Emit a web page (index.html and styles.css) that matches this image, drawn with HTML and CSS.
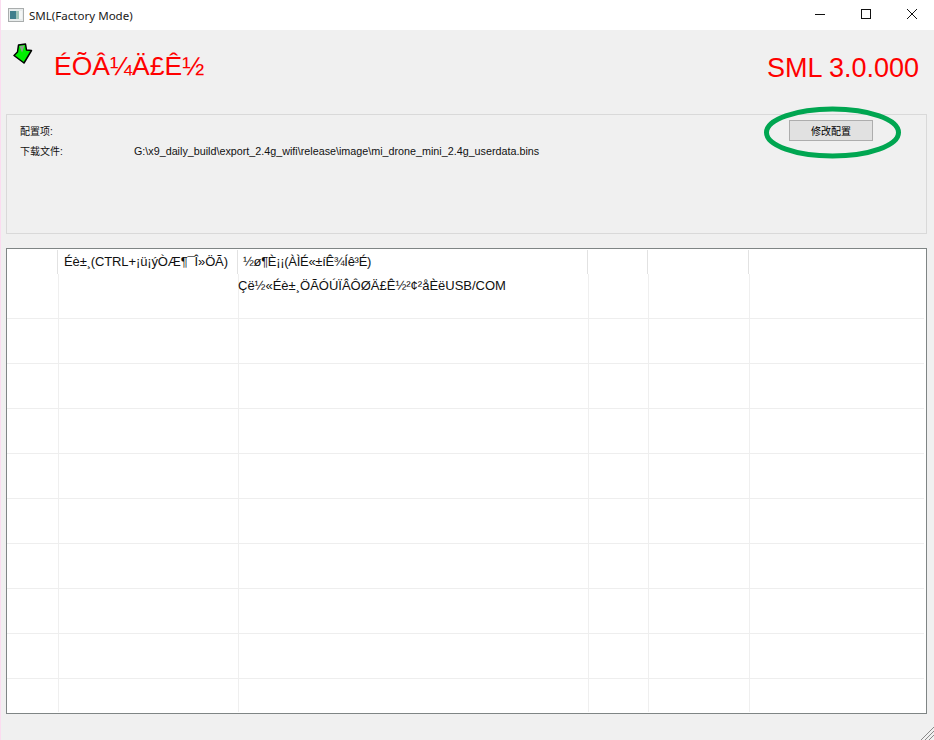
FILE: index.html
```html
<!DOCTYPE html>
<html lang="zh">
<head>
<meta charset="utf-8">
<title>SML(Factory Mode)</title>
<link rel="stylesheet" href="styles.css">
</head>
<body>
<div class="window">
  <header class="titlebar">
    <svg class="app-icon" width="16" height="14" viewBox="0 0 16 14">
      <rect x="0.5" y="0.5" width="15" height="13" fill="#e8ecec" stroke="#a9adad"/>
      <rect x="2" y="3" width="6" height="8" fill="#3f7f8c"/>
      <rect x="8" y="3" width="3" height="8" fill="#9fc4b8"/>
      <rect x="11" y="3" width="3" height="8" fill="#f4f6f6"/>
    </svg>
    <span class="title-text">SML(Factory Mode)</span>
    <div class="win-controls">
      <svg class="win-btn" width="46" height="30" viewBox="0 0 46 30"><path d="M18 14.5H28" stroke="#111" fill="none"/></svg>
      <svg class="win-btn" width="46" height="30" viewBox="0 0 46 30"><rect x="18.5" y="9.5" width="9" height="9" stroke="#111" fill="none"/></svg>
      <svg class="win-btn" width="46" height="30" viewBox="0 0 46 30"><path d="M18 9L28 19M28 9L18 19" stroke="#111" fill="none"/></svg>
    </div>
  </header>

  <section class="banner">
    <svg class="arrow" width="20" height="22" viewBox="0 0 20 22">
      <path d="M5.5 2L12.5 1L13.5 7L18.5 7.5L11 20L1 12.5L4.5 9Z" fill="#00ee00" stroke="#000" stroke-width="1.5" stroke-linejoin="round"/>
      <path d="M6.5 3L11.5 2.5L9 9.5Z" fill="#8fa08f"/>
    </svg>
    <div class="mode">ÉÕÂ¼Ä£Ê½</div>
    <div class="version">SML 3.0.000</div>
  </section>

  <section class="group">
    <div class="info">
      <div class="info-row"><span class="info-label">配置项:</span></div>
      <div class="info-row"><span class="info-label">下载文件:</span><span class="info-value">G:\x9_daily_build\export_2.4g_wifi\release\image\mi_drone_mini_2.4g_userdata.bins</span></div>
    </div>
    <button class="config-btn" type="button">修改配置</button>
    <svg class="highlight" width="139" height="53" viewBox="0 0 139 53"><ellipse cx="69.5" cy="26.5" rx="66" ry="23.5" fill="none" stroke="#00a651" stroke-width="5"/></svg>
  </section>

  <section class="grid">
    <div class="row head">
      <div class="cell"></div>
      <div class="cell t1">Éè±¸(CTRL+¡ü¡ýÒÆ¶¯Î»ÖÃ)</div>
      <div class="cell t2">½ø¶È¡¡(ÀÌÉ«±íÊ¾Íê³É)</div>
      <div class="cell"></div>
      <div class="cell"></div>
      <div class="cell"></div>
    </div>
    <div class="row"><div class="cell"></div><div class="cell"></div><div class="cell msg">Çë½«Éè±¸ÖÃÓÚÏÂÔØÄ£Ê½²¢²åÈëUSB/COM</div><div class="cell"></div><div class="cell"></div><div class="cell"></div></div>
    <div class="row"><div class="cell"></div><div class="cell"></div><div class="cell"></div><div class="cell"></div><div class="cell"></div><div class="cell"></div></div>
    <div class="row"><div class="cell"></div><div class="cell"></div><div class="cell"></div><div class="cell"></div><div class="cell"></div><div class="cell"></div></div>
    <div class="row"><div class="cell"></div><div class="cell"></div><div class="cell"></div><div class="cell"></div><div class="cell"></div><div class="cell"></div></div>
    <div class="row"><div class="cell"></div><div class="cell"></div><div class="cell"></div><div class="cell"></div><div class="cell"></div><div class="cell"></div></div>
    <div class="row"><div class="cell"></div><div class="cell"></div><div class="cell"></div><div class="cell"></div><div class="cell"></div><div class="cell"></div></div>
    <div class="row"><div class="cell"></div><div class="cell"></div><div class="cell"></div><div class="cell"></div><div class="cell"></div><div class="cell"></div></div>
    <div class="row"><div class="cell"></div><div class="cell"></div><div class="cell"></div><div class="cell"></div><div class="cell"></div><div class="cell"></div></div>
    <div class="row"><div class="cell"></div><div class="cell"></div><div class="cell"></div><div class="cell"></div><div class="cell"></div><div class="cell"></div></div>
    <div class="row last"><div class="cell"></div><div class="cell"></div><div class="cell"></div><div class="cell"></div><div class="cell"></div><div class="cell"></div></div>
  </section>

  <svg class="grip" width="14" height="14" viewBox="0 0 14 14">
    <path d="M1 14L14 1M5 14L14 5M9 14L14 9" stroke="#8a8a8a" fill="none"/>
  </svg>
</div>
</body>
</html>
```
FILE: styles.css
```css
* { box-sizing: border-box; }
html, body { margin: 0; padding: 0; }
body { width: 934px; height: 740px; overflow: hidden; background: #f0f0f0; }

.window {
  position: relative;
  width: 934px;
  height: 740px;
  background: #f0f0f0;
  border-left: 1px solid #fbdcf0;
  padding-left: 5px;
  padding-right: 7px;
  font-family: "Liberation Sans", Arial, sans-serif;
  color: #000;
}

.titlebar {
  display: flex;
  align-items: center;
  height: 30px;
  margin: 0 -7px 0 -5px;
  padding-left: 7px;
  background: #fff;
}
.app-icon { margin-right: 5px; flex: none; }
.title-text { font-family: "Noto Sans", sans-serif; font-size: 11.55px; color: #1a1a1a; }
.win-controls { display: flex; margin-left: auto; margin-right: -1px; }
.win-btn { display: block; }

.banner { position: relative; display: flex; height: 84px; }
.arrow { margin: 13px 0 0 7px; flex: none; }
.mode {
  margin: 18px 0 0 21px;
  font-size: 26.5px;
  line-height: 37px;
  color: #ff0000;
}
.version {
  margin: 21px 8px 0 auto;
  font-size: 27px;
  line-height: 34px;
  color: #ff0000;
}

.group {
  position: relative;
  height: 120px;
  border: 1px solid #d9d9d9;
  display: flex;
  justify-content: space-between;
}
.info { padding: 10px 0 0 13px; font-size: 10.75px; color: #111; }
.info-row { display: flex; height: 20px; line-height: 14px; }
.info-label { width: 114px; font-size: 10px; font-family: "Liberation Sans", "Noto Sans CJK SC", sans-serif; }
.info-value { white-space: nowrap; line-height: 12px; }

.config-btn {
  margin: 5px 53px 0 0;
  width: 84px;
  height: 21px;
  padding: 0;
  background: #e1e1e1;
  border: 1px solid #adadad;
  font-family: "Noto Sans CJK SC", sans-serif;
  font-size: 10px;
  color: #000;
}
.highlight { position: absolute; left: 756px; top: -9px; }

.grid {
  margin-top: 14px;
  height: 466px;
  border: 1px solid #7f8585;
  background: #fff;
  overflow: hidden;
}
.row {
  display: grid;
  grid-template-columns: 52px 180px 350px 60px 101px 1fr;
  height: 45px;
  border-bottom: 1px solid #eeeeee;
  margin-right: 2px;
}
.row.last { height: 34px; border-bottom: 0; }
.row.head {
  grid-template-columns: 51px 180px 350px 60px 101px 1fr;
  height: 25px;
  border-bottom: 0;
  padding-top: 1px;
}
.cell {
  position: relative;
  border-right: 1px solid #efefef;
  font-size: 13px;
  white-space: nowrap;
}
.cell:last-child { border-right: 0; }
.last .cell { height: 33px; }
.head .cell { border-right-color: #e2e2e2; line-height: 24px; color: #111; }
.t1 { padding-left: 6px; letter-spacing: -0.13px; }
.t2 { padding-left: 5px; letter-spacing: -0.3px; }
.msg { line-height: 20px; margin-left: -1px; padding-top: 2px; color: #111; }

.grip { position: absolute; right: 0; bottom: 0; }
```
